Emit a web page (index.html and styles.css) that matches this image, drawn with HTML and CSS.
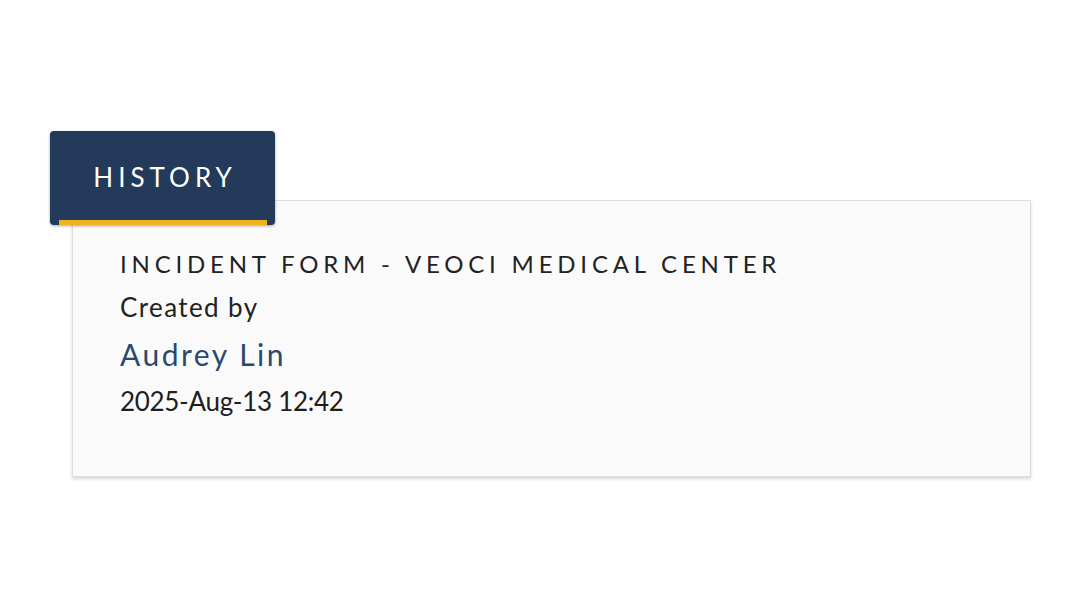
FILE: index.html
```html
<!DOCTYPE html>
<html>
<head>
<meta charset="utf-8">
<link rel="stylesheet" href="styles.css">
</head>
<body>
<div class="stage">
  <div class="history">
    <div class="tab"><span class="tab-label">HISTORY</span><span class="tab-bar"></span></div>
    <div class="card">
      <div class="form-title">INCIDENT FORM - VEOCI MEDICAL CENTER</div>
      <div class="created">Created by</div>
      <div class="author">Audrey Lin</div>
      <div class="stamp">2025-Aug-13 12:42</div>
    </div>
  </div>
</div>
</body>
</html>
```
FILE: styles.css
```css
html, body {
  margin: 0;
  padding: 0;
  background: #ffffff;
}
body {
  font-family: Lato, "Open Sans", sans-serif;
  width: 1080px;
  height: 608px;
  overflow: hidden;
}
.stage {
  padding: 131px 0 0 50px;
}
.history {
  position: relative;
  width: 980px;
  padding-top: 69px;
}
.tab {
  position: absolute;
  left: 0;
  top: 0;
  width: 225px;
  height: 94px;
  background: #243a5a;
  border-radius: 4px;
  box-shadow: 0 1px 3px rgba(0,0,0,0.35);
  display: flex;
  align-items: center;
  justify-content: center;
  z-index: 2;
}
.tab-label {
  color: #ffffff;
  font-size: 26px;
  letter-spacing: 5px;
  margin-right: -5px;
  margin-top: -2px;
}
.tab-bar {
  position: absolute;
  left: 9px;
  right: 8px;
  bottom: 0;
  height: 5px;
  background: #f1b320;
}
.card {
  margin: 0 0 0 22px;
  width: 910px;
  padding: 40px 0 53px 47px;
  background: #fafafa;
  border: 1px solid #dedede;
  box-shadow: 0 2px 3px rgba(0,0,0,0.16);
}
.form-title {
  font-size: 24px;
  line-height: 45px;
  letter-spacing: 4.8px;
  color: #222222;
}
.created {
  font-size: 26px;
  line-height: 43px;
  letter-spacing: 1.4px;
  color: #222222;
}
.author {
  font-size: 30px;
  line-height: 50px;
  letter-spacing: 2.5px;
  color: #284a70;
}
.stamp {
  font-size: 26px;
  line-height: 44px;
  letter-spacing: -0.3px;
  color: #1e1e1e;
}
```
